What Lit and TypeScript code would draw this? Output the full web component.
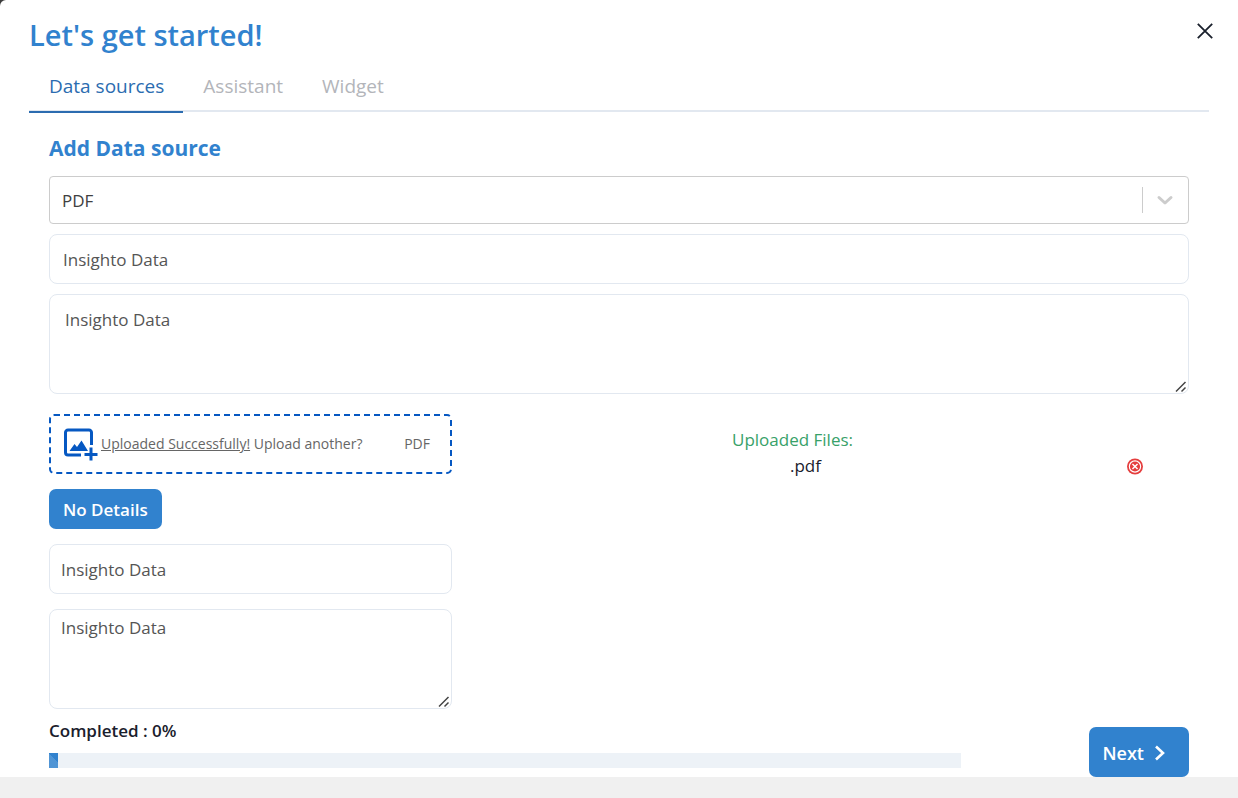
import { LitElement, html, css } from "lit";
import { customElement, property, state } from "lit/decorators.js";
import { classMap } from "lit/directives/class-map.js";

@customElement("upload-progress")
class UploadProgress extends LitElement {
  @property({ type: Number }) value = 0;

  static styles = css`
    :host {
      display: block;
      color: #1a202c;
    }
    .label {
      font-size: 17px;
      line-height: 24px;
      font-weight: 600;
    }
    .track {
      margin-top: 10px;
      height: 15px;
      background: #edf2f7;
    }
    .bar {
      height: 100%;
      background: #3182ce
        linear-gradient(
          45deg,
          rgba(255, 255, 255, 0.15) 25%,
          transparent 25%,
          transparent 50%,
          rgba(255, 255, 255, 0.15) 50%,
          rgba(255, 255, 255, 0.15) 75%,
          transparent 75%
        );
      background-size: 28px 28px;
      background-position: 0 100%;
    }
  `;

  render() {
    return html`
      <div class="label" id="label">Completed : ${this.value}%</div>
      <div class="track" role="progressbar" aria-labelledby="label" aria-valuenow=${this.value}>
        <div class="bar" style="width:${Math.max(this.value, 1)}%"></div>
      </div>
    `;
  }
}

@customElement("app-root")
class AppRoot extends LitElement {
  @state() private tab = "Data sources";

  private tabs = ["Data sources", "Assistant", "Widget"];

  static styles = css`
    :host {
      display: block;
      min-height: 100vh;
      background: #f0f0f0;
      color: #1a202c;
      font-family: "Open Sans", "Noto Sans", sans-serif;
      font-size: 17px;
    }
    * {
      box-sizing: border-box;
    }
    button,
    input,
    select,
    textarea {
      font: inherit;
      margin: 0;
    }
    .backdrop {
      background: #3c3c3c;
    }
    .modal {
      background: #fff;
      border-top-left-radius: 6px;
      padding: 12px 29px 0;
    }
    .header {
      display: flex;
      justify-content: space-between;
      align-items: flex-start;
    }
    .title {
      margin: 0;
      color: #3182ce;
      font-size: 29px;
      line-height: 46px;
      font-weight: 600;
    }
    .close {
      display: grid;
      place-items: center;
      width: 32px;
      height: 32px;
      margin: 3px -12px 0 0;
      padding: 0;
      border: 0;
      background: none;
      color: #1a202c;
    }
    .tabs {
      display: flex;
      margin-top: 4px;
      border-bottom: 2px solid #e2e8f0;
    }
    .tab {
      margin-bottom: -3px;
      padding: 8px 19px 9px 20px;
      border: 0;
      border-bottom: 2px solid transparent;
      background: none;
      color: #b3b5ba;
      font-size: 19px;
      line-height: 32px;
    }
    .tab.active {
      color: #2b6cb0;
      border-color: #2b6cb0;
    }
    .panel {
      padding: 20px 20px 0;
    }
    .heading {
      margin: 0 0 12px;
      color: #3182ce;
      font-size: 21px;
      line-height: 32px;
      font-weight: 700;
    }
    .stack {
      display: grid;
      gap: 10px;
    }
    .select {
      display: grid;
      align-items: center;
    }
    .select > * {
      grid-area: 1 / 1;
    }
    .source {
      appearance: none;
      width: 100%;
      height: 48px;
      padding: 0 12px;
      border: 1px solid #ccc;
      border-radius: 4px;
      background: #fff;
      color: #404040;
    }
    .indicator {
      justify-self: end;
      display: flex;
      align-items: center;
      height: 26px;
      padding: 0 14px 0 13px;
      margin-right: 1px;
      border-left: 1px solid #ccc;
      color: #ccc;
      pointer-events: none;
    }
    .field {
      display: block;
      width: 100%;
      border: 1px solid #e2e8f0;
      border-radius: 8px;
      background: #fff;
      color: #555;
      line-height: 24px;
      height: 50px;
      padding: 0 13px;
    }
    .area {
      height: 100px;
      padding: 13px 15px;
      resize: vertical;
    }
    .area::-webkit-resizer {
      background: url("data:image/svg+xml,%3Csvg xmlns='http://www.w3.org/2000/svg' width='15' height='15' fill='none' stroke='%23444' stroke-width='1.500'%3E%3Cpath d='M3 13.500L12.500 4M8.500 13.500L12.500 9.500'/%3E%3C/svg%3E")
        no-repeat right bottom;
    }
    .files {
      display: grid;
      grid-template-columns: minmax(300px, 403fr) 737fr;
      margin-top: 20px;
    }
    .details {
      display: grid;
      gap: 15px;
      justify-items: start;
    }
    .details .field {
      padding: 0 11px;
    }
    .details .area {
      padding: 6px 11px;
    }
    .drop {
      display: flex;
      align-items: center;
      width: 100%;
      height: 60px;
      padding: 0 20px 0 12px;
      border: 2px dashed #0658c2;
      border-radius: 5px;
      color: #666;
      font-size: 14px;
      line-height: 24px;
      cursor: pointer;
      white-space: nowrap;
    }
    .file {
      display: none;
    }
    .drop-text {
      flex: 1;
      margin-left: 3px;
    }
    .button {
      display: flex;
      align-items: center;
      border: 0;
      border-radius: 7px;
      background: #3182ce;
      color: #fff;
      font-weight: 600;
    }
    .toggle {
      height: 40px;
      padding: 0 14px;
    }
    .uploaded {
      display: grid;
      grid-template-columns: 1fr 44px;
      align-content: start;
      align-items: center;
      justify-items: center;
      padding: 13px 32px 0 20px;
      line-height: 26px;
    }
    .uploaded-title {
      color: #38a169;
    }
    .name {
      grid-row: 2;
      padding-left: 26px;
    }
    .remove {
      grid-row: 2;
      display: block;
      padding: 0;
      border: 0;
      background: none;
    }
    .footer {
      display: flex;
      justify-content: space-between;
      align-items: flex-end;
      margin-top: 10px;
    }
    .progress {
      width: 80%;
      padding-bottom: 9px;
    }
    .next {
      height: 50px;
      gap: 8px;
      padding: 2px 21px 0 13px;
      font-size: 18px;
    }
    svg {
      display: block;
    }
  `;

  render() {
    return html`
      <div class="backdrop">
        <main class="modal">
          <header class="header">
            <h1 class="title">Let's get started!</h1>
            <button class="close" aria-label="Close">
              <svg width="16" height="16" viewBox="0 0 16 16" fill="none" stroke="currentColor" stroke-width="1.8">
                <path d="M.8.8l14.4 14.4M15.2.8L.8 15.2" />
              </svg>
            </button>
          </header>
          <div class="tabs" role="tablist">
            ${this.tabs.map(
              (name) => html`<button
                class=${classMap({ tab: true, active: name === this.tab })}
                role="tab"
                aria-selected=${name === this.tab}
                @click=${() => (this.tab = name)}
              >${name}</button>`
            )}
          </div>
          <section class="panel">
            <h2 class="heading">Add Data source</h2>
            <div class="stack">
              <div class="select">
                <select class="source" aria-label="Data source type">
                  <option>PDF</option>
                </select>
                <span class="indicator">
                  <svg width="18" height="18" viewBox="0 0 18 18" fill="none" stroke="currentColor" stroke-width="3" stroke-linecap="round" stroke-linejoin="round">
                    <path d="M3 6.5l6 5.5 6-5.5" />
                  </svg>
                </span>
              </div>
              <input class="field" aria-label="Name" .value=${"Insighto Data"} />
              <textarea class="field area" aria-label="Description" .value=${"Insighto Data"}></textarea>
            </div>
            <div class="files">
              <div class="details">
                <label class="drop">
                  <input class="file" type="file" accept=".pdf" />
                  <svg width="35" height="34" viewBox="0 0 35 34" fill="none" stroke="#0658c2" stroke-width="3">
                    <path d="M28.5 18V5.500A2.500 2.500 0 0 0 26 3H5A2.500 2.500 0 0 0 2.500 5.500V25.500A2.500 2.500 0 0 0 5 28h13" />
                    <path d="M6.500 24l5-7 2.500 3 4.500-6.500 6.500 10.500z" fill="#0658c2" stroke="none" />
                    <path d="M28 20.500v13M21.500 27.500h13" />
                  </svg>
                  <span class="drop-text"><u>Uploaded Successfully!</u> Upload another?</span>
                  <span>PDF</span>
                </label>
                <button class="button toggle">No Details</button>
                <input class="field" aria-label="File name" .value=${"Insighto Data"} />
                <textarea class="field area" aria-label="File description" .value=${"Insighto Data"}></textarea>
              </div>
              <div class="uploaded">
                <span class="uploaded-title">Uploaded Files:</span>
                <span class="name">.pdf</span>
                <button class="remove" aria-label="Remove file">
                  <svg width="16" height="17" viewBox="0 0 17 17" fill="none" stroke="#fff">
                    <circle cx="8.500" cy="8.500" r="8.500" fill="#e53e3e" stroke="none" />
                    <circle cx="8.500" cy="8.500" r="6" stroke-width="1.200" />
                    <path d="M5.800 5.800l5.400 5.400M11.200 5.800l-5.400 5.400" stroke-width="1.500" />
                  </svg>
                </button>
              </div>
            </div>
            <footer class="footer">
              <upload-progress class="progress" .value=${0}></upload-progress>
              <button class="button next">
                Next
                <svg width="16" height="18" viewBox="0 0 16 18" fill="none" stroke="currentColor" stroke-width="2.600">
                  <path d="M4 2.500l7 6.500-7 6.500" />
                </svg>
              </button>
            </footer>
          </section>
        </main>
      </div>
    `;
  }
}
